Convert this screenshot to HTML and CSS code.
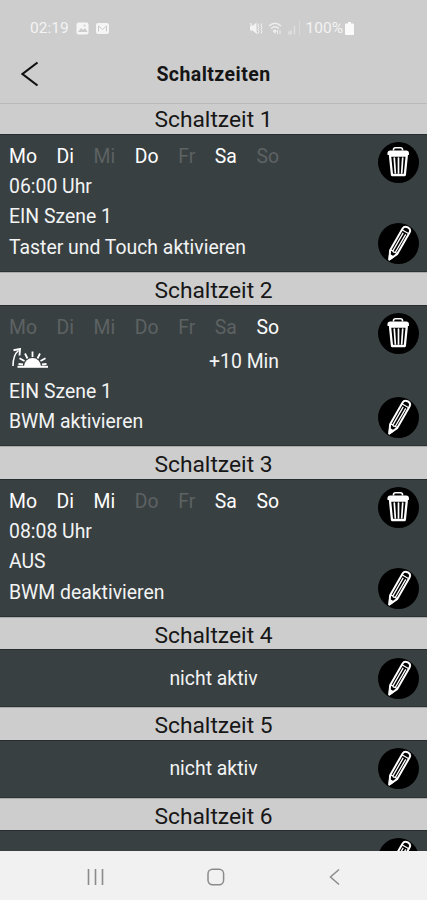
FILE: index.html
```
<!DOCTYPE html>
<html lang="de">
<head>
<meta charset="utf-8">
<title>Schaltzeiten</title>
<link rel="stylesheet" href="styles.css">
</head>
<body>
<svg class="defs" aria-hidden="true">
  <symbol id="trash" viewBox="0 0 41 41">
    <circle cx="20.5" cy="20.5" r="20.5" fill="#000"/>
    <path d="M15.500 8.500V7.500Q15.500 5.800 17.500 5.800h5Q24.500 5.800 24.500 7.500V8.500" fill="none" stroke="#fff" stroke-width="1.600"/>
    <path d="M9.500 11.300q0-2.700 2.700-2.700h16q2.700 0 2.700 2.700v1.700H9.500z" fill="#fff"/>
    <path d="M12 13.500l2 19.500h12.800l2-19.500z" fill="none" stroke="#fff" stroke-width="2.300" stroke-linejoin="round"/>
    <path d="M16.300 16l1 15M20.500 16v15M24.700 16l-1 15" fill="none" stroke="#fff" stroke-width="1.700" stroke-linecap="round"/>
  </symbol>
  <symbol id="pencil" viewBox="0 0 41 41">
    <circle cx="20.5" cy="20.5" r="20.5" fill="#000"/>
    <g transform="translate(20.600 20.500) rotate(30)" fill="none" stroke="#fff" stroke-width="2" stroke-linejoin="round">
      <path d="M-4 10V-15q0-3.500 4-3.500t4 3.500V10L0 18.500z"/>
      <path d="M-4-13.500h8M-1.300 9.500V-11.500M1.600 9.500V-11.500" stroke-width="1.300"/>
      <path d="M-4 10q2-1.500 4 0 2-1.500 4 0" stroke-width="1.300"/>
      <path d="M-1.700 14.500L0 18.500l1.700-4z" fill="#fff"/>
    </g>
  </symbol>
</svg>
<div class="screen">
  <div class="status">
    <div class="status-left">
      <span>02:19</span>
      <svg width="13" height="13" viewBox="0 0 13 13"><rect x=".5" y=".5" width="12" height="12" rx="2" fill="#f5f5f5"/><path d="M2 10l3-4 2 2 2-2 2.500 4z" fill="#ccc"/><circle cx="8.500" cy="3.500" r="1" fill="#ccc"/></svg>
      <svg class="mail" width="13" height="11" viewBox="0 0 13 11"><rect width="13" height="11" rx="2" fill="#f5f5f5"/><path d="M2.500 8.500V3l4 3.500 4-3.500v5.500" fill="none" stroke="#ccc" stroke-width="1"/></svg>
    </div>
    <div class="status-right">
      <svg width="14" height="13" viewBox="0 0 14 13" fill="none" stroke="#f3f3f3"><path d="M1 4h2.500l4-3.500v11L3.500 8.500H1z" fill="#f3f3f3" stroke="none"/><path d="M1 1l7 10.500" stroke-width="1.200"/><path d="M10 1.500l-1 2 1 2-1 2 1 2-1 2M13 1.500l-1 2 1 2-1 2 1 2-1 2"/></svg>
      <svg width="14" height="13" viewBox="0 0 14 13" fill="none" stroke="#eee" stroke-width="1.400"><path d="M1 4Q7-1.500 13 4M3 6.500q4-3.500 8 0M5.500 9Q7 7.500 8 9L6.800 10.500z"/><path d="M9.500 8v4M12 12V8" stroke-width="1"/></svg>
      <svg width="14" height="15" viewBox="0 0 14 15" stroke="#e8e8e8" fill="none"><path d="M2 10.500v3M4 9.500v4" stroke-width="1.200"/><path d="M7.500 5v8.500" stroke="#dedede" stroke-width="1.500"/><path d="M12.500 0v14" stroke="#d8d8d8"/></svg>
      <span>100%</span>
      <svg class="battery" width="9" height="13" viewBox="0 0 9 13"><path d="M1 1.500h2V0h3v1.500h2q1 0 1 1V12q0 1-1 1H1q-1 0-1-1V2.500q0-1 1-1z" fill="#fafafa"/></svg>
    </div>
  </div>
  <header class="appbar">
    <svg class="back" width="18" height="26" viewBox="0 0 18 26"><path d="M16.500 1.500L1.500 13l15 11.500" fill="none" stroke="#111" stroke-width="2.200"/></svg>
    <h1>Schaltzeiten</h1>
  </header>
  <main class="list">
    <h2 class="first">Schaltzeit 1</h2>
    <section class="card c1">
      <div class="info">
        <div class="days"><b>Mo</b><b>Di</b><i>Mi</i><b>Do</b><i>Fr</i><b>Sa</b><i>So</i></div>
        <p>06:00 Uhr</p><p>EIN Szene 1</p><p>Taster und Touch aktivieren</p>
      </div>
      <div class="actions"><svg><use href="#trash"/></svg><svg><use href="#pencil"/></svg></div>
    </section>
    <h2>Schaltzeit 2</h2>
    <section class="card c2">
      <div class="info">
        <div class="days"><i>Mo</i><i>Di</i><i>Mi</i><i>Do</i><i>Fr</i><i>Sa</i><b>So</b></div>
        <div class="sun">
          <svg width="38" height="22" viewBox="0 0 38 22" fill="none" stroke="#fff">
            <path d="M2 18Q2 7 7.500 2.500" stroke-width="1.600"/><path d="M2.500 2.300L9 1l-.500 6.500" stroke-width="1.900"/>
            <path d="M6.500 18.800h30.500" stroke-width="2"/>
            <path d="M13 18.500a8.500 8.500 0 0 1 17 0z" fill="#fff" stroke="none"/>
            <path d="M21.500 9V3.500M16.500 10.500L14 5.500M26.500 10.500L29 5.500M13.500 13L8.500 10.200M29.500 13l5-2.800M12 16.500L7.500 16M31 16.500l4.500-.500" stroke-width="1.800"/>
          </svg>
          <span>+10 Min</span>
        </div>
        <p>EIN Szene 1</p><p>BWM aktivieren</p>
      </div>
      <div class="actions"><svg><use href="#trash"/></svg><svg><use href="#pencil"/></svg></div>
    </section>
    <h2>Schaltzeit 3</h2>
    <section class="card c3">
      <div class="info">
        <div class="days"><b>Mo</b><b>Di</b><b>Mi</b><i>Do</i><i>Fr</i><b>Sa</b><b>So</b></div>
        <p>08:08 Uhr</p><p>AUS</p><p>BWM deaktivieren</p>
      </div>
      <div class="actions"><svg><use href="#trash"/></svg><svg><use href="#pencil"/></svg></div>
    </section>
    <h2>Schaltzeit 4</h2>
    <section class="card idle"><p>nicht aktiv</p><div class="actions"><svg><use href="#pencil"/></svg></div></section>
    <h2>Schaltzeit 5</h2>
    <section class="card idle"><p>nicht aktiv</p><div class="actions"><svg><use href="#pencil"/></svg></div></section>
    <h2>Schaltzeit 6</h2>
    <section class="card idle last"><div class="actions"><svg><use href="#pencil"/></svg></div></section>
  </main>
  <nav class="navbar">
    <svg width="18" height="18" viewBox="0 0 18 18"><path d="M1.500 1v16M8.500 1v16M15.500 1v16" stroke="#8b8b8b" stroke-width="1.600"/></svg>
    <svg width="18" height="18" viewBox="0 0 18 18"><rect x="1" y="1.200" width="15.600" height="15.600" rx="4.500" fill="none" stroke="#8b8b8b" stroke-width="1.500"/></svg>
    <svg width="18" height="18" viewBox="0 0 18 18"><path d="M13 1.500L4.500 9l8.500 7.500" fill="none" stroke="#8b8b8b" stroke-width="1.500"/></svg>
  </nav>
</div>
</body>
</html>
```
FILE: styles.css
```
* { box-sizing: border-box; margin: 0; padding: 0; }
body { font-family: Roboto, "Liberation Sans", sans-serif; background: #cdcdcd; }
svg { display: block; flex: none; }
.defs { position: absolute; width: 0; height: 0; }
.screen { width: 427px; height: 900px; display: flex; flex-direction: column; overflow: hidden; }
.status { height: 46px; padding: 10px 73px 0 30px; display: flex; justify-content: space-between; align-items: center; color: #f3f3f3; font-size: 15.500px; }
.status-left, .status-right { display: flex; align-items: center; }
.status-left { gap: 7px; }
.status-right { gap: 5px; }
.status-right .battery { margin-left: -3px; }
.appbar { height: 58px; display: grid; grid-template-columns: 40px 1fr 40px; align-items: center; border-bottom: 1px solid #bababa; }
.back { margin: -2px 0 0 21px; }
h1 { text-align: center; font-size: 19.500px; letter-spacing: 0.45px; line-height: 26px; font-weight: 700; color: #151515; }
.list { flex: 1; overflow: hidden; }
h2 { height: 32.500px; line-height: 35.200px; text-align: center; font-size: 22.800px; font-weight: 400; color: #171717; border-top: 1px solid #aaa; }
h2.first { height: 30px; line-height: 31px; border: 0; }
.card { display: flex; justify-content: space-between; background: #394042; color: #f2f4f4; padding: 7px 8px 7px 9px; border-top: 1px solid #272d2f; border-bottom: 1px solid #2c3234; }
.c1, .c3 { height: 138px; }
.c2 { height: 141.700px; }
.info { width: 270px; }
.card p { font-size: 19.400px; line-height: 30.400px; white-space: nowrap; }
.days { display: flex; justify-content: space-between; font-size: 19.400px; line-height: 29px; height: 30px; }
.days b { font-weight: 400; color: #fff; }
.days i { font-style: normal; color: #5d6263; }
.sun { height: 34.300px; padding-top: 3px; display: flex; align-items: center; justify-content: space-between; font-size: 19.400px; }
.sun svg { margin: -5px 0 0 2px; }
.actions { display: flex; flex-direction: column; justify-content: space-between; }
.actions svg { width: 41px; height: 41px; }
.idle { height: 58px; padding-left: 49px; align-items: center; }
.idle p { flex: 1; text-align: center; padding-top: 2px; }
.last { align-items: flex-start; justify-content: flex-end; }
.navbar { height: 49px; background: #f1f1f1; display: flex; justify-content: space-between; align-items: center; padding: 3px 83px 0 87px; }
```
